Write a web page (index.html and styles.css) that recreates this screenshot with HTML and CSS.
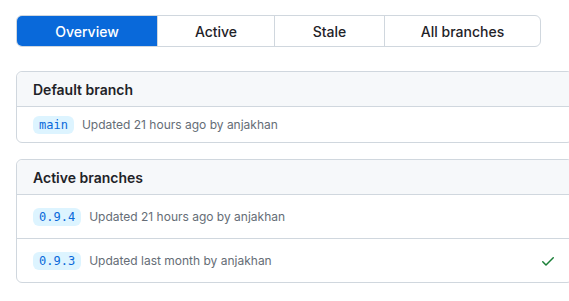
FILE: index.html
```html
<!DOCTYPE html>
<html lang="en">
  <head>
    <meta charset="UTF-8" />
    <meta name="viewport" content="width=device-width, initial-scale=1.0" />
    <title>Branches</title>
    <link rel="stylesheet" href="styles.css">
  </head>
  <body>
    <nav class="tabs">
      <a class="tab tab-overview selected">Overview</a>
      <a class="tab tab-active">Active</a>
      <a class="tab tab-stale">Stale</a>
      <a class="tab tab-all">All branches</a>
    </nav>

    <div class="box">
      <div class="box-header">Default branch</div>
      <div class="box-row">
        <div class="branch">
          <span class="branch-name">main</span>
          <span class="updated">Updated 21 hours ago by anjakhan</span>
        </div>
      </div>
    </div>

    <div class="box">
      <div class="box-header">Active branches</div>
      <div class="box-row tall">
        <div class="branch">
          <span class="branch-name">0.9.4</span>
          <span class="updated">Updated 21 hours ago by anjakhan</span>
        </div>
      </div>
      <div class="box-row tall">
        <div class="branch">
          <span class="branch-name">0.9.3</span>
          <span class="updated">Updated last month by anjakhan</span>
        </div>
        <svg class="check" width="16" height="16" viewBox="0 0 16 16">
          <path d="M13.78 4.22a.75.75 0 0 1 0 1.06l-7.25 7.25a.75.75 0 0 1-1.06 0L2.22 9.28a.751.751 0 0 1 .018-1.042.751.751 0 0 1 1.042-.018L6 10.94l6.72-6.72a.75.75 0 0 1 1.060 0Z"></path>
        </svg>
      </div>
    </div>
  </body>
</html>
```

FILE: styles.css
```css
body {
  margin: 0;
  padding: 15px 16px;
  font-family: Inter, "Noto Sans", sans-serif;
  font-size: 14px;
  color: #1f2328;
  overflow: hidden;
}

.tabs {
  display: flex;
  width: 523px;
  height: 30px;
  border: 1px solid #d0d7de;
  border-radius: 6px;
  overflow: hidden;
}
.tab {
  display: flex;
  align-items: center;
  justify-content: center;
  font-weight: 500;
  color: #1f2328;
  border-left: 1px solid #d0d7de;
}
.tab:first-child {
  border-left: none;
}
.tab.selected {
  background-color: #0969da;
  color: #ffffff;
}
.tab-overview { width: 140px; }
.tab-active { width: 116px; }
.tab-stale { width: 109px; }
.tab-all { flex: 1; }

.box {
  width: 555px;
  margin-top: 24px;
  border: 1px solid #d0d7de;
  border-radius: 6px;
}
.box + .box {
  margin-top: 16px;
}
.box-header {
  height: 34px;
  display: flex;
  align-items: center;
  padding: 0 16px;
  background-color: #f6f8fa;
  border-bottom: 1px solid #d0d7de;
  border-radius: 6px 6px 0 0;
  font-weight: 600;
}
.box-row {
  height: 35px;
  display: flex;
  align-items: center;
  justify-content: space-between;
  padding: 0 16px;
}
.box-row.tall {
  height: 43px;
  border-bottom: 1px solid #d0d7de;
}
.box-row.tall:last-child {
  border-bottom: none;
}
.branch {
  display: flex;
  align-items: center;
  gap: 8px;
}
.branch-name {
  font-family: "DejaVu Sans Mono", "Liberation Mono", monospace;
  font-size: 12px;
  line-height: 18px;
  padding: 0 6px;
  color: #0969da;
  background-color: #ddf4ff;
  border-radius: 6px;
}
.updated {
  color: #656d76;
  font-size: 12px;
}
.check {
  fill: #1a7f37;
}
```
